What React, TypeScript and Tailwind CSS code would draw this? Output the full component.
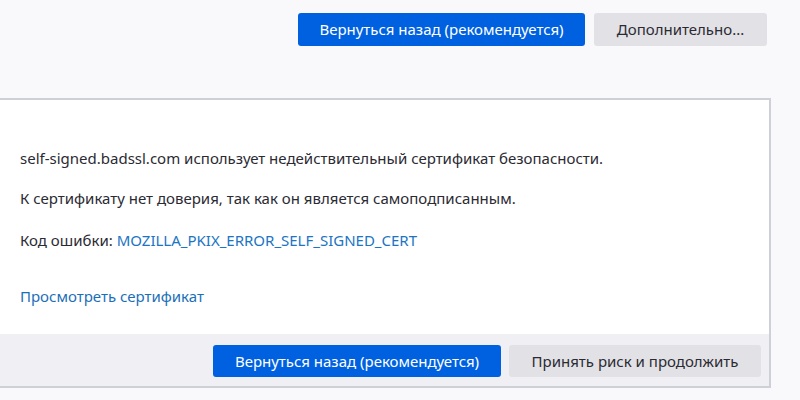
import React from "react";

export default function App() {
  const font = { fontFamily: '"Noto Sans", "Open Sans", sans-serif' };
  return (
    <div className="w-[800px] h-[400px] bg-[#f9f9fb] overflow-hidden text-[15px]" style={font}>
      <div className="flex justify-end gap-[9px] pt-[13px] pr-[33px]">
        <button className="w-[287px] h-[33px] rounded-[3px] bg-[#0061e0] text-white text-[15px]">
          Вернуться назад (рекомендуется)
        </button>
        <button className="w-[173px] h-[33px] rounded-[3px] bg-[#e2e2e6] text-[#2b2a33] text-[15px]">
          Дополнительно...
        </button>
      </div>
      <div className="mt-[52px] w-[771px] h-[290px] bg-white border-t-2 border-r-2 border-b-2 border-[#cfcfd8] flex flex-col">
        <div className="flex-1 pl-[20px] pt-[48px] text-[#2b2a33]">
          <p className="leading-[20px]">self-signed.badssl.com использует недействительный сертификат безопасности.</p>
          <p className="leading-[20px] mt-[20px]">К сертификату нет доверия, так как он является самоподписанным.</p>
          <p className="leading-[20px] mt-[22px]">
            Код ошибки: <span className="text-[#1b74c4]">MOZILLA_PKIX_ERROR_SELF_SIGNED_CERT</span>
          </p>
          <p className="leading-[20px] mt-[36px] text-[#1b6fb8]">Просмотреть сертификат</p>
        </div>
        <div className="h-[52px] bg-[#f0f0f4] flex justify-end items-start gap-[8px] pt-[11px] pr-[8px]">
          <button className="w-[288px] h-[32px] rounded-[3px] bg-[#0061e0] text-white text-[15px]">
            Вернуться назад (рекомендуется)
          </button>
          <button className="w-[252px] h-[32px] rounded-[3px] bg-[#e2e2e6] text-[#2b2a33] text-[15px]">
            Принять риск и продолжить
          </button>
        </div>
      </div>
    </div>
  );
}
